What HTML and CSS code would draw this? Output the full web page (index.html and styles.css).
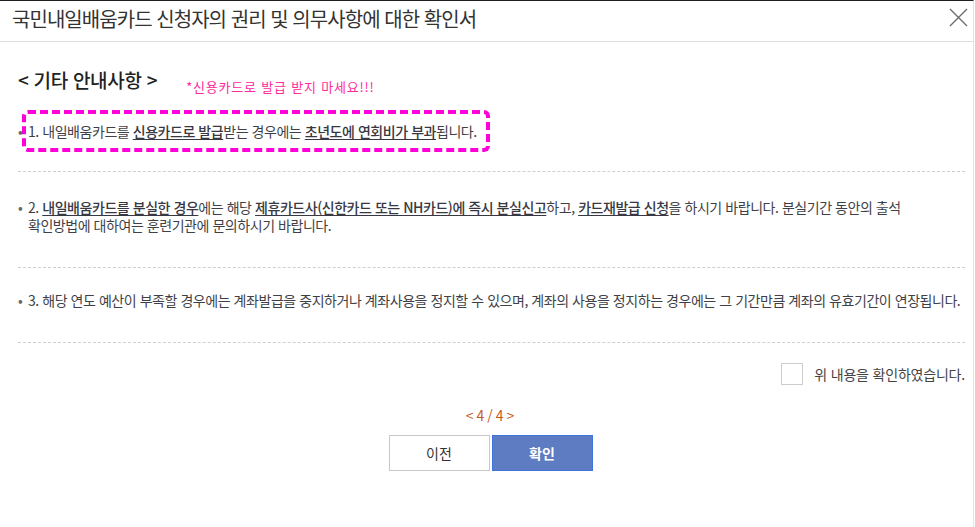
FILE: index.html
```html
<!DOCTYPE html>
<html lang="ko">
<head>
<meta charset="utf-8">
<title>확인서</title>
<link rel="stylesheet" href="styles.css">
</head>
<body>
<div class="modal">
  <header class="hd">
    <h1 class="hd-title">국민내일배움카드 신청자의 권리 및 의무사항에 대한 확인서</h1>
    <button class="close" type="button" aria-label="닫기">
      <svg width="19" height="19" viewBox="0 0 19 19"><path d="M1 1 L18 18 M18 1 L1 18" stroke="#6e6e6e" stroke-width="1.4" fill="none"/></svg>
    </button>
  </header>
  <div class="bd">
    <div class="sec-head">
      <h2 class="sec-title">&lt; 기타 안내사항 &gt;</h2>
      <span class="note">*신용카드로 발급 받지 마세요!!!</span>
    </div>
    <ul class="items">
      <li class="item item-first"><span class="hl">1. 내일배움카드를 <u>신용카드로 발급</u>받는 경우에는 <u>초년도에 연회비가 부과</u>됩니다.</span></li>
      <li class="item item-second">2. <u>내일배움카드를 분실한 경우</u>에는 해당 <u>제휴카드사(신한카드 또는 NH카드)에 즉시 분실신고</u>하고, <u>카드재발급 신청</u>을 하시기 바랍니다. 분실기간 동안의 출석 확인방법에 대하여는 훈련기관에 문의하시기 바랍니다.</li>
      <li class="item item-third">3. 해당 연도 예산이 부족할 경우에는 계좌발급을 중지하거나 계좌사용을 정지할 수 있으며, 계좌의 사용을 정지하는 경우에는 그 기간만큼 계좌의 유효기간이 연장됩니다.</li>
    </ul>
    <label class="agree"><span class="chk"></span><span class="agree-text">위 내용을 확인하였습니다.</span></label>
    <div class="pager">&lt;4/4&gt;</div>
    <div class="btns">
      <button class="btn btn-prev" type="button">이전</button>
      <button class="btn btn-ok" type="button">확인</button>
    </div>
  </div>
</div>
</body>
</html>
```

FILE: styles.css
```css
* { box-sizing: border-box; }
html, body { margin: 0; padding: 0; background: #fff; }
body {
  font-family: "Noto Sans CJK KR", "Noto Sans", sans-serif;
  color: #333;
}
.modal {
  width: 974px;
  height: 527px;
  border-top: 1px solid #1e1e1e;
  border-right: 1px solid #e4e4e4;
}
.hd {
  height: 41px;
  border-bottom: 1px solid #dedede;
  display: flex;
  align-items: center;
  justify-content: space-between;
  padding: 0 5px 0 12px;
}
.hd-title {
  margin: 0;
  font-size: 20px;
  font-weight: 400;
  color: #333;
  letter-spacing: -0.95px;
  line-height: 26px;
  margin-top: -4px;
}
.close {
  border: 0;
  background: none;
  padding: 0;
  width: 19px;
  height: 19px;
  margin-top: -8px;
}
.close svg { display: block; }
.bd {
  padding: 0 8px 0 18px;
}
.sec-head {
  display: flex;
  align-items: flex-start;
  padding-top: 25px;
  height: 68px;
}
.sec-title {
  margin: 0;
  font-size: 19px;
  font-weight: 500;
  color: #222;
  line-height: 26px;
  letter-spacing: -0.3px;
}
.note {
  margin-left: 29px;
  margin-top: 12px;
  font-size: 13px;
  line-height: 16px;
  color: #ff2a9b;
  letter-spacing: 0.8px;
}
.items {
  list-style: none;
  margin: 0;
  padding: 0;
}
.item {
  position: relative;
  font-size: 14px;
  line-height: 18px;
  color: #3f3f48;
  padding-left: 10px;
  letter-spacing: -0.45px;
  word-break: keep-all;
  border-bottom: 1px dashed #cfcfcf;
}
.item::before {
  content: "•";
  position: absolute;
  left: 0;
  color: #666;
}
.item u {
  text-decoration: underline;
  text-underline-offset: 2px;
  font-weight: 500;
  color: #383842;
}
.item-first {
  padding-top: 0;
  padding-bottom: 19px;
}
.item-first::before { top: 12px; }
.hl {
  display: inline-block;
  margin-left: -6px;
  border: 4px dashed #ff00d8;
  border-radius: 6px;
  padding: 8px 9px 8px 2px;
}
.item-second {
  padding-top: 26px;
  padding-bottom: 33px;
}
.item-second::before { top: 26px; }
.item-third {
  padding-top: 23px;
  padding-bottom: 33px;
}
.item-third::before { top: 23px; }
.agree {
  display: flex;
  justify-content: flex-end;
  align-items: center;
  margin-top: 20px;
  gap: 11px;
}
.chk {
  width: 22px;
  height: 22px;
  border: 1px solid #cccccc;
  background: #fff;
}
.agree-text {
  font-size: 14px;
  color: #444;
  letter-spacing: -0.2px;
}
.pager {
  text-align: center;
  margin-top: 20px;
  font-size: 14px;
  line-height: 20px;
  color: #c9571a;
  letter-spacing: 3px;
}
.btns {
  display: flex;
  justify-content: center;
  gap: 2px;
  margin-top: 10px;
  padding-right: 2px;
}
.btn {
  width: 101px;
  height: 36px;
  font-family: inherit;
  font-size: 14px;
  padding: 0;
}
.btn-prev {
  background: #fff;
  border: 1px solid #c9c9c9;
  color: #333;
}
.btn-ok {
  background: #5d7cc1;
  border: 1px solid #3f72de;
  color: #fff;
  font-weight: 700;
}
```
